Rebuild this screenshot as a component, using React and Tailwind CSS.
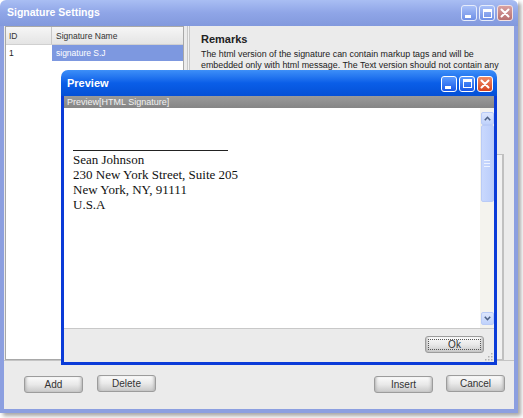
import { useState } from "react";

const ui = { fontFamily: '"Liberation Sans", Arial, sans-serif' };
const serif = { fontFamily: '"Liberation Serif", "Times New Roman", serif' };

const TitleBtn = ({ kind, pale }) => {
    const base = pale
        ? "bg-gradient-to-b from-[#a9c0f8] to-[#6f8fe6] border-[#e6ecfb]"
        : "bg-gradient-to-b from-[#5b9bff] to-[#1a56e6] border-white";
    const close = pale
        ? "bg-gradient-to-b from-[#d8a0a0] to-[#b87070] border-[#f3e2e2]"
        : "bg-gradient-to-b from-[#f08a64] to-[#d4401c] border-white";
    return (
        <div className={`w-[16px] h-[16px] rounded-[3px] border flex items-center justify-center ${kind === "close" ? close : base}`}>
            {kind === "min" && <div className="w-[6px] h-[3px] bg-white mt-[7px] -ml-[3px]" />}
            {kind === "max" && <div className="w-[9px] h-[9px] border border-white border-t-[3px]" />}
            {kind === "close" && (
                <svg width="10" height="10" viewBox="0 0 10 10">
                    <path d="M1.5 1.5 L8.5 8.5 M8.5 1.5 L1.5 8.5" stroke="white" strokeWidth="2" strokeLinecap="round" />
                </svg>
            )}
        </div>
    );
};

const XpButton = ({ children, focus, className = "" }) => (
    <button
        className={`h-[17px] w-[59px] rounded-[3px] border border-[#9c9c9c] bg-gradient-to-b from-[#fbfbfb] via-[#e9e9e9] to-[#c9c9c9] shadow-[inset_3px_0_3px_-2px_#b0b0b0,inset_-3px_0_3px_-2px_#b0b0b0] text-[10px] text-[#333] leading-none flex items-center justify-center ${className}`}
        style={ui}
    >
        {focus ? (
            <span className="border border-dotted border-[#555] w-[53px] h-[11px] flex items-center justify-center">{children}</span>
        ) : children}
    </button>
);

const ScrollArrow = ({ up }) => (
    <div className="h-[13px] w-[13px] rounded-[2px] border border-[#b9cbf7] bg-gradient-to-b from-[#dce6fd] to-[#c0d2fb] flex items-center justify-center">
        <svg width="7" height="5" viewBox="0 0 7 5">
            <path d={up ? "M0.8 4.2 L3.5 1.3 L6.2 4.2" : "M0.8 0.8 L3.5 3.7 L6.2 0.8"} fill="none" stroke="#4d6185" strokeWidth="1.6" />
        </svg>
    </div>
);

const Preview = () => (
    <div className="absolute left-[61px] top-[70px] w-[436px] h-[295px] flex flex-col">
        <div className="h-[26px] rounded-t-[7px] bg-gradient-to-b from-[#3d8ff8] via-[#0a5ee8] to-[#0550d6] flex items-center justify-between pl-[6px] pr-[4px]">
            <span className="text-white font-bold text-[11px] mt-[1px]" style={ui}>Preview</span>
            <div className="flex gap-[2px] mt-[1px]">
                <TitleBtn kind="min" />
                <TitleBtn kind="max" />
                <TitleBtn kind="close" />
            </div>
        </div>
        <div className="flex-1 flex flex-col border-x-[3px] border-b-[3px] border-[#0a3bd8] bg-[#ebebeb]">
            <div className="h-[12px] bg-gradient-to-b from-[#9a9a9a] to-[#858585] text-[9px] text-[#f2f2f2] leading-[12px] pl-[3px]" style={ui}>
                Preview[HTML Signature]
            </div>
            <div className="h-[221px] bg-white flex border-b border-[#c8c8c8]">
                <div className="flex-1 pt-[42px] pl-[9px] text-[13px] leading-[15px] text-[#111]" style={serif}>
                    <div className="w-[155px] border-t border-[#222] mb-[1px]" />
                    <div>Sean Johnson</div>
                    <div>230 New York Street, Suite 205</div>
                    <div>New York, NY, 91111</div>
                    <div>U.S.A</div>
                </div>
                <div className="w-[14px] bg-[#f4f3ee] flex flex-col pt-[4px] pb-[3px] items-center">
                    <ScrollArrow up />
                    <div className="h-[77px] w-[13px] rounded-[2px] border border-[#b9cbf7] bg-gradient-to-r from-[#c9d8fd] to-[#bacdfb] flex flex-col items-center justify-center gap-[2px]">
                        <div className="w-[6px] h-px bg-[#eef3ff]" />
                        <div className="w-[6px] h-px bg-[#eef3ff]" />
                        <div className="w-[6px] h-px bg-[#eef3ff]" />
                    </div>
                    <div className="flex-1" />
                    <ScrollArrow />
                </div>
            </div>
            <div className="flex-1 flex items-start justify-end pt-[7px] pr-[10px] relative">
                <XpButton focus className="w-[57px] h-[16px]">Ok</XpButton>
                <svg className="absolute right-[1px] bottom-[1px]" width="8" height="8" viewBox="0 0 8 8">
                    <rect x="6" y="0" width="1.5" height="1.5" fill="#b0b0b0" />
                    <rect x="3" y="3" width="1.5" height="1.5" fill="#b0b0b0" />
                    <rect x="6" y="3" width="1.5" height="1.5" fill="#b0b0b0" />
                    <rect x="0" y="6" width="1.5" height="1.5" fill="#b0b0b0" />
                    <rect x="3" y="6" width="1.5" height="1.5" fill="#b0b0b0" />
                    <rect x="6" y="6" width="1.5" height="1.5" fill="#b0b0b0" />
                </svg>
            </div>
        </div>
    </div>
);

const App = () => {
    const [selected] = useState(1);
    return (
        <div className="w-[523px] h-[418px] bg-white relative overflow-hidden" style={ui}>
            <div className="w-[518px] h-[413px] flex flex-col shadow-[3px_3px_4px_rgba(0,0,0,0.35)]">
                <div className="h-[26px] rounded-t-[6px] bg-gradient-to-b from-[#a9bef3] via-[#8fa5e7] to-[#8299dd] flex items-center justify-between pl-[7px] pr-[5px]">
                    <span className="text-white font-bold text-[10.5px]">Signature Settings</span>
                    <div className="flex gap-[2px]">
                        <TitleBtn kind="min" pale />
                        <TitleBtn kind="max" pale />
                        <TitleBtn kind="close" pale />
                    </div>
                </div>
                <div className="flex-1 flex flex-col border-x-4 border-b-4 border-[#8c9fe0] bg-[#ebebeb]">
                    <div className="h-[335px] flex border-b border-[#c4c4c4]">
                        <div className="ml-[1px] w-[179px] bg-white border border-[#a8a8a8] flex flex-col">
                            <div className="h-[18px] flex bg-gradient-to-b from-[#f6f6f6] to-[#e4e4e4] border-b border-[#d0d0d0] text-[8.5px] text-[#333]">
                                <div className="w-[46px] border-r border-[#c8c8c8] pl-[3px] leading-[18px]">ID</div>
                                <div className="flex-1 pl-[4px] leading-[18px]">Signature Name</div>
                            </div>
                            <div className="h-[16px] flex text-[8.5px]">
                                <div className="w-[46px] pl-[3px] leading-[16px] text-[#222]">{selected}</div>
                                <div className="flex-1 bg-[#7d98e0] text-white pl-[4px] leading-[16px]">signature S.J</div>
                            </div>
                        </div>
                        <div className="w-[8px] flex justify-center">
                            <div className="w-[3px] border-x border-[#c8c8c8] bg-[#f2f2f2]" />
                        </div>
                        <div className="flex-1 flex flex-col pl-[9px] pr-[10px] pt-[6px]">
                            <div className="font-bold text-[11px] text-[#222] leading-[14px]">Remarks</div>
                            <div className="text-[8.9px] text-[#222] leading-[11px] mt-[3px] whitespace-nowrap">
                                <div>The html version of the signature can contain markup tags and will be</div>
                                <div>embedded only with html message. The Text version should not contain any</div>
                                <div>html tags.</div>
                            </div>
                            <div className="mt-[72px] h-[210px] -ml-[2px] mr-[0px] border border-[#c0c0c0] border-r-2 bg-[#f1f1f1]" />
                        </div>
                    </div>
                    <div className="flex-1 flex items-start justify-between pt-[15px] pl-[20px] pr-[9px]">
                        <div className="flex gap-[14px]">
                            <XpButton>Add</XpButton>
                            <XpButton className="-mt-[1px]">Delete</XpButton>
                        </div>
                        <div className="flex gap-[13px]">
                            <XpButton>Insert</XpButton>
                            <XpButton className="-mt-[1px]">Cancel</XpButton>
                        </div>
                    </div>
                </div>
            </div>
            <Preview />
        </div>
    );
};

export default App;
